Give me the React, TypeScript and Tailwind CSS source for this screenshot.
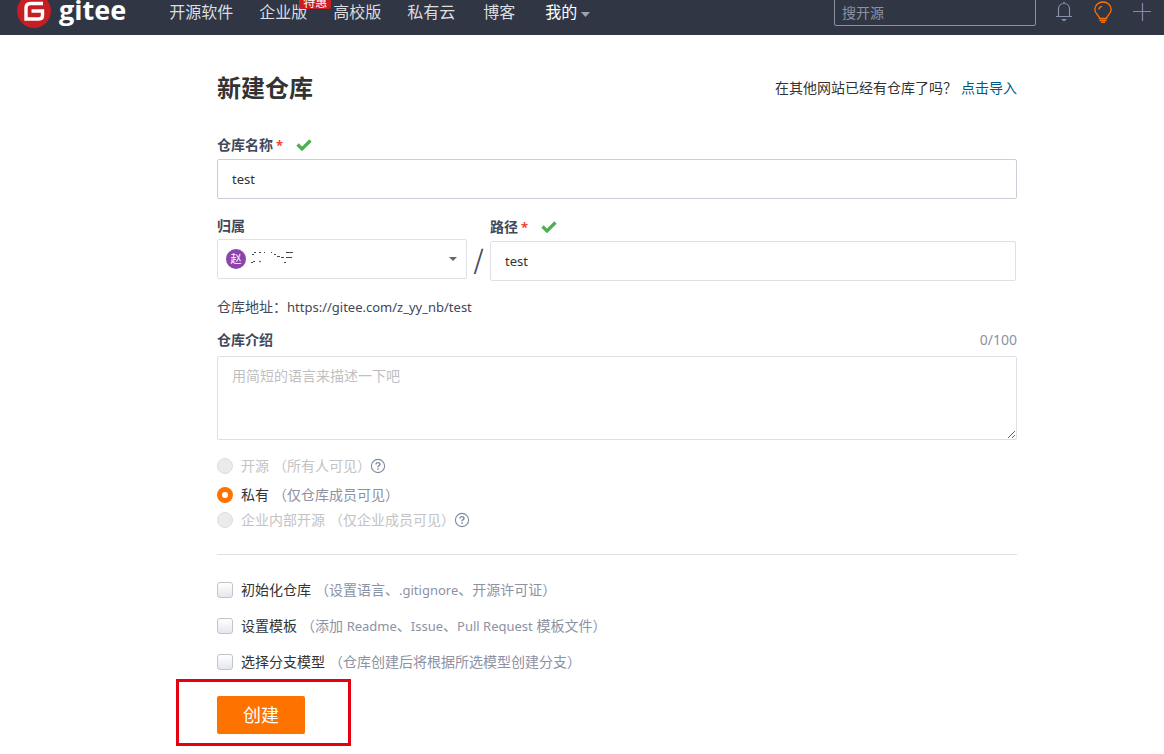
import type { ReactNode } from "react";

const navLinks = [
  { label: "开源软件", className: "ml-[43px]" },
  { label: "企业版", className: "ml-[26px]", badge: "特惠" },
  { label: "高校版", className: "ml-[26px]" },
  { label: "私有云", className: "ml-[26px]" },
  { label: "博客", className: "ml-7" },
];

const visibilities = [
  { id: "public", label: "开源", hint: "（所有人可见）", disabled: true, help: true, className: "mt-4" },
  { id: "private", label: "私有", hint: "（仅仓库成员可见）", disabled: false, help: false, className: "mt-[9px]" },
  { id: "inner", label: "企业内部开源", hint: "（仅企业成员可见）", disabled: true, help: true, className: "mt-[5px]" },
];

const options = [
  {
    id: "init",
    label: "初始化仓库",
    hint: <>（设置语言、<Latin>.gitignore</Latin>、开源许可证）</>,
  },
  {
    id: "template",
    label: "设置模板",
    hint: <>（添加 <Latin>Readme</Latin>、<Latin>Issue</Latin>、<Latin>Pull Request</Latin> 模板文件）</>,
  },
  { id: "branch", label: "选择分支模型", hint: "（仓库创建后将根据所选模型创建分支）" },
];

// Latin words run large next to 14px Chinese text
function Latin({ children }: { children: ReactNode }) {
  return <span className="text-[13px]">{children}</span>;
}

function Check() {
  return (
    <svg className="ml-[13px] h-3 w-4" viewBox="0 0 16 12" aria-hidden="true">
      <path d="M1.500 5.500l4.500 4.500 8.500-8.500" fill="none" stroke="#4caf50" strokeWidth="3.200" />
    </svg>
  );
}

function Help() {
  return (
    <svg className="-ml-px h-4 w-4" viewBox="0 0 16 16" fill="none" stroke="#7b8ba0" aria-hidden="true">
      <circle cx="8" cy="8" r="6.6" strokeWidth="1.1" />
      <path d="M6 6.6c0-1.3.9-2 2-2s2 .7 2 1.8c0 1.2-2 1.3-2 2.8" strokeWidth="1.4" />
      <path d="M8 10.2v1.5" strokeWidth="1.5" />
    </svg>
  );
}

function FieldLabel({ htmlFor, required, children }: { htmlFor: string; required?: boolean; children: ReactNode }) {
  return (
    <div className="flex h-5 items-center">
      <label htmlFor={htmlFor} className="font-bold text-[#40485b]">
        {children}
        {required && <span className="ml-[3px] text-[13px] text-[#f44336]">*</span>}
      </label>
      {required && <Check />}
    </div>
  );
}

function Header() {
  return (
    <header className="h-[35px] overflow-hidden bg-[#303643]">
      <div className="flex h-6 items-center pr-[13px] pl-[17px] text-base whitespace-nowrap">
        <a href="#" className="flex items-center text-white">
          <svg className="h-[34px] w-[34px] shrink-0" viewBox="0 0 34 34" aria-hidden="true">
            <circle cx="17" cy="16" r="17" fill="#c71d23" />
            <path
              d="M26 8.500H13.500C10.500 8.500 9 10 9 13v11h13c2.500 0 3.500-1 3.500-3.500V16H14.500"
              fill="none"
              stroke="#fff"
              strokeWidth="3.400"
            />
          </svg>
          <span className="ml-2 h-10 font-['Open_Sans',sans-serif] text-[27px] leading-9 font-bold">gitee</span>
        </a>
        <nav className="flex items-center text-[#dcdde0]">
          {navLinks.map((link) => (
            <a key={link.label} href="#" className={`relative ${link.className}`}>
              {link.label}
              {link.badge && (
                <span className="absolute -top-1 left-10 rounded-xs bg-[#c71d23] px-1 text-xs leading-[13px] text-white">
                  {link.badge}
                </span>
              )}
            </a>
          ))}
          <button type="button" className="ml-[30px] flex items-center text-white">
            我的
            <svg className="mt-1 ml-1 h-[5px] w-[9px]" viewBox="0 0 9 5" aria-hidden="true">
              <path d="M0 0h9L4.500 5z" fill="#a0a3a9" />
            </svg>
          </button>
        </nav>
        <input
          type="search"
          aria-label="搜开源"
          placeholder="搜开源"
          className="ml-auto h-7 w-[202px] rounded-xs border border-[#8c92a4] bg-transparent px-[7px] text-sm text-white placeholder:text-[#8c92a4]"
        />
        <button type="button" aria-label="通知" className="ml-[19px]">
          <svg className="h-[22px] w-[18px]" viewBox="0 0 18 22" fill="none" stroke="#8290a8" strokeWidth="1.200">
            <path d="M1 15.500h16M3.500 15.500V8c0-3 2-5.500 5.500-5.500s5.500 2.500 5.500 5.500v7.500M9 2.500V.5" />
            <path d="M6 18h6L9 20.500z" fill="#8290a8" stroke="none" />
          </svg>
        </button>
        <button type="button" aria-label="提示" className="ml-5">
          <svg className="h-[22px] w-5" viewBox="0 0 20 22" fill="none" stroke="#fe7300" strokeWidth="1.300">
            <path d="M6.500 17.500c0-3-4.700-4.500-4.700-9a8.200 7.500 0 0 1 16.400 0c0 4.500-4.700 6-4.700 9zM6.500 19.500h7M8 21.400h4" />
            <path d="M6 8.500C6 6.500 7 5.500 9 5.300" />
          </svg>
        </button>
        <button type="button" aria-label="新建" className="ml-5">
          <svg className="h-[18px] w-[18px]" viewBox="0 0 18 18" stroke="#8c86ae" strokeWidth="1.200">
            <path d="M9.500 0v18M0 8.500h18" />
          </svg>
        </button>
      </div>
    </header>
  );
}

export default function App() {
  return (
    <div className="bg-white font-['Noto_Sans','Noto_Sans_CJK_SC',sans-serif] text-sm leading-5 text-[#40485b]">
      <Header />
      <main className="mr-[147px] ml-[217px] pt-9 pb-5">
        <div className="flex h-[34px] items-center justify-between">
          <h1 className="text-2xl font-bold text-[#333]">新建仓库</h1>
          <p className="text-[#333]">
            在其他网站已经有仓库了吗？
            <a href="#" className="ml-1 text-[#005980]">点击导入</a>
          </p>
        </div>

        <form className="mt-[30px]" onSubmit={(e) => e.preventDefault()}>
          <FieldLabel htmlFor="name" required>仓库名称</FieldLabel>
          <input
            id="name"
            defaultValue="test"
            className="mt-1 block h-10 w-full rounded-xs border border-[#cdcdd8] px-[14px] text-[13px] text-[#333]"
          />

          <div className="mt-[17px] flex items-start">
            <div className="w-[250px]">
              <FieldLabel htmlFor="owner">归属</FieldLabel>
              <div className="relative mt-[3px]">
                <select
                  id="owner"
                  className="block h-10 w-full appearance-none rounded-xs border border-[#dce3e8] bg-white"
                >
                  <option aria-label="赵" />
                </select>
                <div className="pointer-events-none absolute inset-0 flex items-center px-[9px]">
                  <span className="flex h-5 w-5 items-center justify-center rounded-full bg-[#8e44ad] text-[11px] text-white">
                    赵
                  </span>
                  <svg className="mb-1 ml-1 h-4 w-12" viewBox="0 0 48 16" fill="none" stroke="#40485b" aria-hidden="true">
                    <path d="M4 3.500h2M2 5.500h2M9 3.500h2M1 13.500h2M3 12.500h2M9 12l2 1M14 3.500h1M21 3.500h1M24 5.500h2M27 7.500h3M31 8.500h3M36 3.500h7M36 8.500h6M34 13.500h2" />
                  </svg>
                  <svg className="mr-px ml-auto h-1 w-2" viewBox="0 0 8 4" aria-hidden="true">
                    <path d="M0 0h8L4 4z" fill="#5f6674" />
                  </svg>
                </div>
              </div>
            </div>
            <span className="mt-[26px] w-[23px] text-center font-['Noto_Sans_CJK_SC',sans-serif] text-[26px] leading-8">/</span>
            <div className="mt-px mr-px flex-1">
              <FieldLabel htmlFor="path" required>路径</FieldLabel>
              <input
                id="path"
                defaultValue="test"
                className="mt-1 block h-10 w-full rounded-xs border border-[#dfdfe8] px-[14px] text-[13px] text-[#333]"
              />
            </div>
          </div>

          <p className="mt-4">
            仓库地址：<Latin>https://gitee.com/z_yy_nb/test</Latin>
          </p>

          <div className="mt-[13px] flex items-center justify-between">
            <FieldLabel htmlFor="intro">仓库介绍</FieldLabel>
            <span className="text-[#8c92a4]">0/100</span>
          </div>
          <textarea
            id="intro"
            placeholder="用简短的语言来描述一下吧"
            className="mt-[6px] block h-[84px] w-full resize-y rounded-xs border border-[#dfdfe8] px-[14px] py-[9px] placeholder:text-[#bfbfc3]"
          />

          {visibilities.map((item) => (
            <div key={item.id} className={`flex h-5 items-center ${item.className}`}>
              <input
                id={item.id}
                type="radio"
                name="visibility"
                defaultChecked={!item.disabled}
                disabled={item.disabled}
                className="h-4 w-4 appearance-none rounded-full border border-[#ddd] bg-[#ebebeb] checked:border-[5px] checked:border-[#fe7300] checked:bg-white"
              />
              <label htmlFor={item.id} className={`ml-2 ${item.disabled ? "text-[#c3c3c3]" : "text-[#333]"}`}>
                {item.label}
                <span className={`ml-1 ${item.disabled ? "" : "text-[#8c92a4]"}`}>{item.hint}</span>
              </label>
              {item.help && <Help />}
            </div>
          ))}

          <hr className="mt-6 mb-[25px] border-[#dce3e8]" />

          <div className="space-y-4">
            {options.map((item) => (
              <div key={item.id} className="flex h-5 items-center">
                <input
                  id={item.id}
                  type="checkbox"
                  className="h-4 w-4 appearance-none rounded-[3px] border border-[#c2c4c8] bg-linear-to-b from-white to-[#e4e7ed]"
                />
                <label htmlFor={item.id} className="ml-2 text-[#333]">
                  {item.label}
                  <span className="ml-1 text-[#8c92a4]">{item.hint}</span>
                </label>
              </div>
            ))}
          </div>

          <div className="relative mt-6 w-[88px]">
            <button type="submit" className="block h-[38px] w-full rounded-xs bg-[#fe7300] text-lg text-white">
              创建
            </button>
            <div className="pointer-events-none absolute -top-[17px] -right-[46px] -bottom-3 -left-[41px] border-[3px] border-[#e60012]" />
          </div>
        </form>
      </main>
    </div>
  );
}
